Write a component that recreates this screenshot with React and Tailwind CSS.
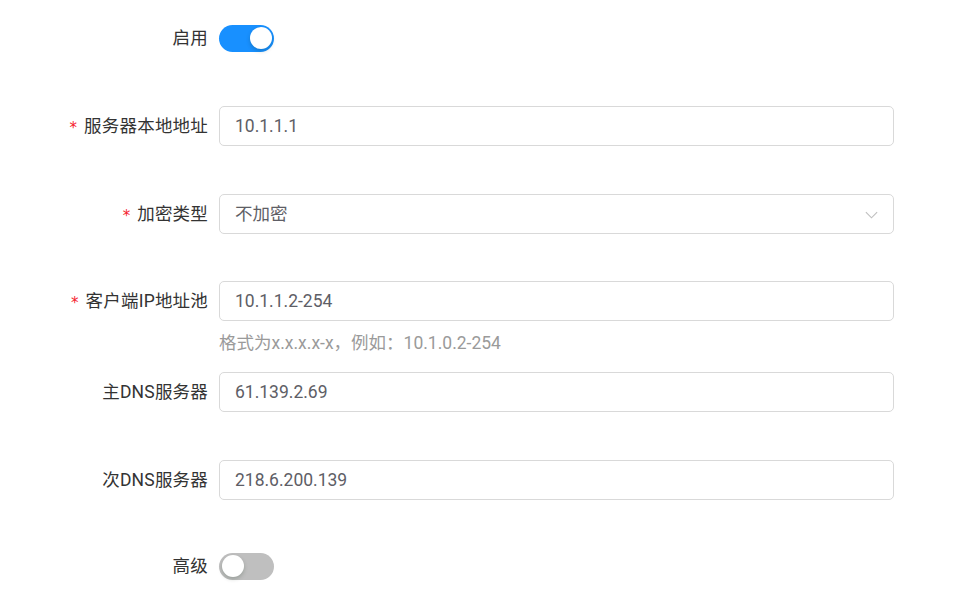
import React from "react";

const font = { fontFamily: 'Roboto, "Noto Sans CJK SC", sans-serif' };

function Label({ required, children }) {
  return (
    <div className="w-[219px] shrink-0 pr-[11px] flex items-center justify-end text-[17.5px] text-[#333333]">
      {required && (
        <span className="text-[#f5222d] mr-[7px] text-[15px] leading-none mt-[4px]" style={{ fontFamily: '"DejaVu Sans", sans-serif' }}>*</span>
      )}
      <span className="tracking-[0.2px]">{children}</span>
    </div>
  );
}

function Input({ value }) {
  return (
    <div className="w-[675px] h-[40px] border border-[#d9d9d9] rounded-[5px] flex items-center pl-[15px] text-[17.5px] text-[#5e5e66] bg-white">
      {value}
    </div>
  );
}

function Switch({ on }) {
  return (
    <div
      className={`w-[55px] h-[27px] rounded-full relative ${on ? "bg-[#1890ff]" : "bg-[#bfbfbf]"}`}
    >
      <div
        className={`absolute top-[2.5px] w-[22px] h-[22px] rounded-full bg-white shadow-[0_2px_4px_rgba(0,35,11,0.2)] ${on ? "right-[2.5px]" : "left-[2.5px]"}`}
      />
    </div>
  );
}

export default function App() {
  return (
    <div className="w-[974px] h-[595px] bg-white flex flex-col" style={font}>
      <div className="h-[40px] mt-[18px] flex items-center">
        <Label>启用</Label>
        <Switch on />
      </div>
      <div className="h-[40px] mt-[48px] flex items-center">
        <Label required>服务器本地地址</Label>
        <Input value="10.1.1.1" />
      </div>
      <div className="h-[40px] mt-[48px] flex items-center">
        <Label required>加密类型</Label>
        <div className="w-[675px] h-[40px] border border-[#d9d9d9] rounded-[5px] flex items-center justify-between pl-[15px] pr-[14px] text-[17.5px] text-[#5e5e66]">
          <span>不加密</span>
          <svg width="15" height="15" viewBox="0 0 16 16" fill="none">
            <path d="M2 5.5 L8 11.5 L14 5.5" stroke="#bfbfbf" strokeWidth="1.2" />
          </svg>
        </div>
      </div>
      <div className="h-[40px] mt-[47px] flex items-center">
        <Label required>客户端IP地址池</Label>
        <Input value="10.1.1.2-254" />
      </div>
      <div className="flex">
        <div className="w-[219px] shrink-0" />
        <div className="pt-[10px] h-[51px] leading-[24px] text-[17.5px] text-[#9a9a9a]">
          格式为x.x.x.x-x，例如：10.1.0.2-254
        </div>
      </div>
      <div className="h-[40px] flex items-center">
        <Label>主DNS服务器</Label>
        <Input value="61.139.2.69" />
      </div>
      <div className="h-[40px] mt-[48px] flex items-center">
        <Label>次DNS服务器</Label>
        <Input value="218.6.200.139" />
      </div>
      <div className="h-[40px] mt-[46px] flex items-center">
        <Label>高级</Label>
        <Switch />
      </div>
    </div>
  );
}
